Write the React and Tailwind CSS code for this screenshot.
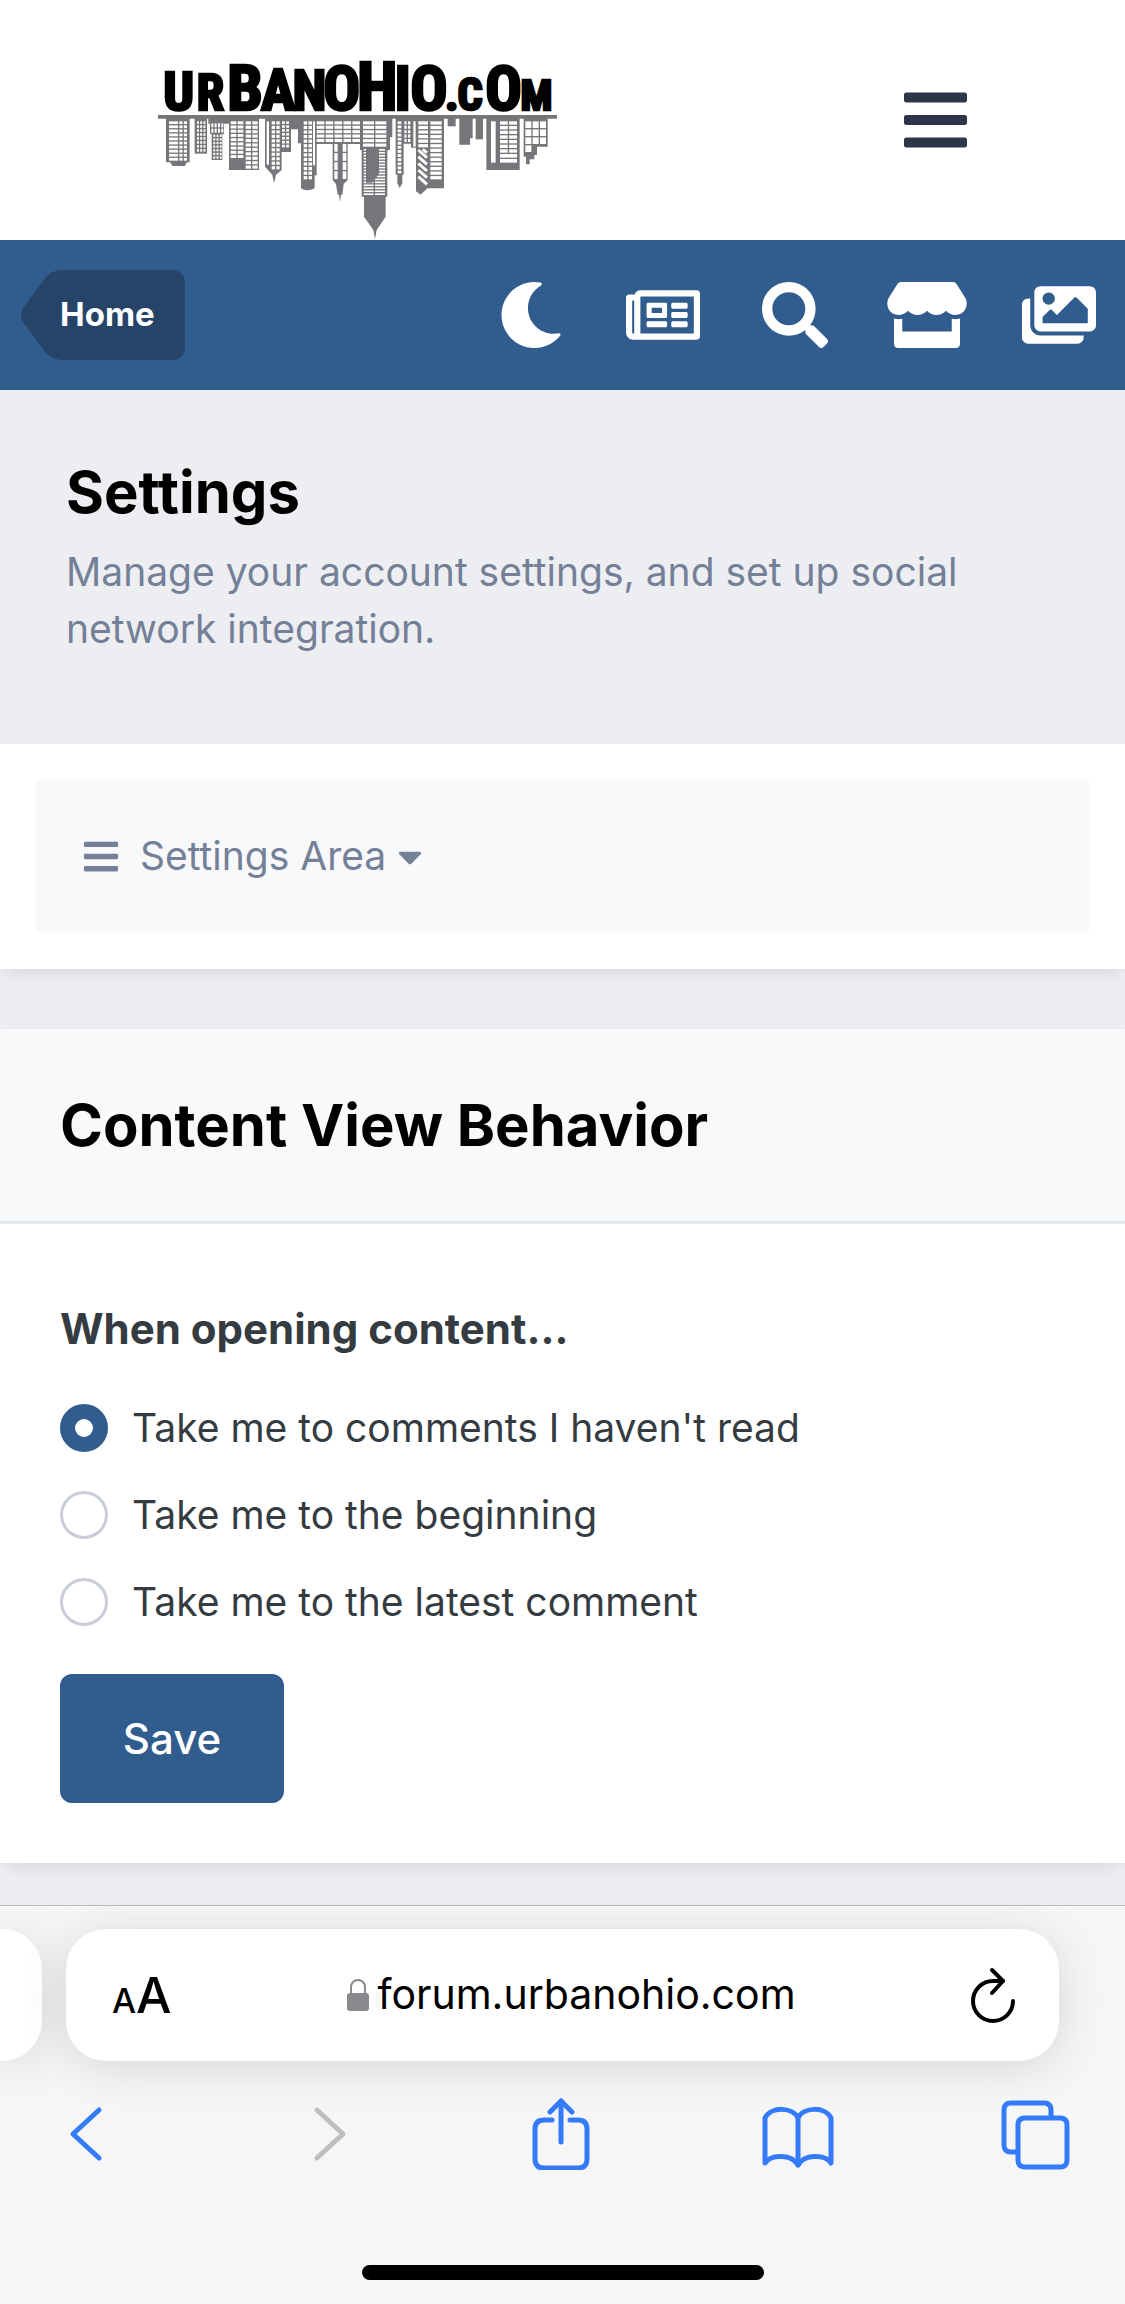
import { useState } from "react";
import { FaBars, FaCaretDown, FaImages, FaMoon, FaRegNewspaper, FaSearch, FaStore } from "react-icons/fa";

const LETTERS = [
  ["U", 116, 162],
  ["R", 211, 148],
  ["B", 315, 190],
  ["A", 414, 172],
  ["N", 508, 166],
  ["O", 605, 184],
  ["H", 712, 198],
  ["I", 788, 182],
  ["O", 867, 186],
  [".", 935, 140],
  ["C", 990, 132],
  ["O", 1091, 182],
  ["M", 1189, 126],
];

/* x, y, width, height, columns, rows of a block of lit windows */
const WINDOWS = [
  [87, 364, 27, 118, 1, 10],
  [118, 364, 23, 118, 2, 10],
  [171, 364, 25, 91, 3, 8],
  [214, 370, 36, 28, 4, 2],
  [220, 404, 25, 72, 3, 7],
  [272, 364, 38, 110, 2, 9],
  [317, 364, 36, 142, 2, 11],
  [380, 364, 7, 130, 1, 1],
  [395, 364, 24, 144, 2, 11],
  [426, 364, 21, 78, 2, 7],
  [491, 364, 25, 174, 2, 13],
  [519, 364, 6, 132, 1, 1],
  [530, 364, 130, 62, 5, 5],
  [583, 432, 10, 105, 1, 4],
  [608, 432, 11, 105, 1, 4],
  [669, 364, 70, 76, 2, 6],
  [671, 447, 64, 138, 2, 16],
  [773, 364, 11, 156, 1, 13],
  [793, 364, 18, 62, 2, 5],
  [820, 364, 7, 76, 1, 1],
  [835, 364, 29, 78, 1, 6],
  [871, 364, 34, 174, 1, 13],
  [1053, 364, 14, 124, 1, 1],
  [1080, 364, 51, 94, 2, 7],
  [1080, 462, 51, 26, 1, 2],
  [1156, 364, 62, 68, 3, 3],
  [1156, 436, 18, 20, 1, 1],
];

function WindowBlock({ block }) {
  const [x, y, w, h, cols, rows] = block;
  const gap = 4;
  const cw = (w - gap * (cols - 1)) / cols;
  const ch = (h - gap * (rows - 1)) / rows;
  const cells = [];
  for (let r = 0; r < rows; r++) {
    for (let c = 0; c < cols; c++) {
      cells.push(<rect key={`${r}-${c}`} x={x + c * (cw + gap)} y={y + r * (ch + gap)} width={cw} height={ch} />);
    }
  }
  return <g>{cells}</g>;
}

function Logo() {
  return (
    <svg viewBox="0 0 1320 720" className="h-60 w-[440px] shrink-0" role="img" aria-label="UrbanOhio.com">
      <g fill="#000" stroke="#000" strokeWidth="8" fontWeight="700" textAnchor="middle" fontFamily="'Liberation Sans Narrow', 'Roboto Condensed', 'Liberation Sans', sans-serif">
        {LETTERS.map(([ch, x, size], i) => (
          <text key={i} x={x} y="331" fontSize={size}>
            {ch}
          </text>
        ))}
      </g>
      <g fill="#77757a">
        <path d="M54 345H1251V356H54z" />
        <path d="M78 350H149V487H141L134 498H98L90 487H78z" />
        <path d="M164 350H201V461H164z" />
        <path d="M205 350H268V371H252V402H247V480H215V402H210V371H205z" />
        <path d="M267 350H357V510H267z" />
        <path d="M375 350H453V456H425V510L408 524L402 550L397 524L375 500z" />
        <path d="M453 350H530V526H524V565Q500 577 483 565V430H474V388H453z" />
        <path d="M526 350H665V432H623V540L611 552L607 584H603L600 607L597 584H593L588 552L578 540V432H526z" />
        <path d="M660 350H757V412H750V450H742V590H737V650L710 690L705 718L700 690L672 650V590H665V450H660z" />
        <path d="M767 350H813V431H791V524H787V550L779 564L772 550V524H767z" />
        <path d="M813 350H912V565H862L842 584L828 574V443H813z" />
        <path d="M923 350H947V379H923z" />
        <path d="M958 350H998V415H990V434H958z" />
        <path d="M1007 350H1029V418H1007z" />
        <path d="M1039 350H1139V510H1039z" />
        <path d="M1151 350H1223V440H1191V465H1183V478H1169V493H1158V470H1151z" />
      </g>
      <g fill="#fff">
        {WINDOWS.map((b, i) => (
          <WindowBlock key={i} block={b} />
        ))}
      </g>
      <path d="M678 443H717V522L697 548H678z" fill="#77757a" />
      <path d="M835 450L861 473M835 470L861 493M835 490L861 513M835 510L861 533M835 530L861 553M848 448L861 458" stroke="#fff" strokeWidth="9" />
    </svg>
  );
}

const NAV = [
  { label: "Dark mode", Icon: FaMoon, size: "h-[66px] w-[66px]" },
  { label: "News", Icon: FaRegNewspaper, size: "h-[66px] w-[74px]" },
  { label: "Search", Icon: FaSearch, size: "h-[66px] w-[66px]" },
  { label: "Store", Icon: FaStore, size: "h-[66px] w-20" },
  { label: "Gallery", Icon: FaImages, size: "h-[66px] w-[74px]" },
];

const OPTIONS = ["Take me to comments I haven't read", "Take me to the beginning", "Take me to the latest comment"];

const TOOLS = [
  { label: "Back", color: "text-[#347bf9]", d: ["M49 12L23 36L49 60"] },
  { label: "Forward", color: "text-[#bfbfbf]", d: ["M30 12L56 36L30 60"] },
  { label: "Share", color: "text-[#347bf9]", d: ["M36 3V44", "M25 14L36 3L47 14", "M27 22H19Q10 22 10 31V61Q10 70 19 70H53Q62 70 62 61V31Q62 22 53 22H45"] },
  { label: "Bookmarks", color: "text-[#347bf9]", d: ["M36 20V67", "M36 20C31 9 9 8 3 20V65C9 56 30 56 36 67C42 56 63 56 69 65V20C63 8 41 9 36 20z"] },
  { label: "Tabs", color: "text-[#347bf9]", d: ["M19 54H12Q5 54 5 47V12Q5 5 12 5H45Q52 5 52 12V19", "M26 20H61Q68 20 68 27V62Q68 69 61 69H26Q19 69 19 62V27Q19 20 26 20z"] },
];

export default function App() {
  const [choice, setChoice] = useState(0);
  return (
    <div className="flex min-h-screen flex-col overflow-x-hidden bg-[#edeef2] font-['Inter',sans-serif] text-[39px] text-[#353c41]">
      <header className="flex items-center justify-between bg-white pr-[158px] pl-[140px]">
        <a href="#home">
          <Logo />
        </a>
        <button type="button" aria-label="Menu" className="text-[#2d3548]">
          <FaBars className="h-18 w-[63px]" />
        </button>
      </header>

      <nav className="flex h-[150px] items-center justify-between bg-[#315c8e] pl-5">
        <a href="#home" className="relative flex h-[90px] w-[165px] items-center pl-10 text-[33px] font-bold text-white">
          <svg viewBox="0 0 165 90" className="absolute inset-0 h-full w-full" aria-hidden="true">
            <path d="M42 0H151Q165 0 165 14V76Q165 90 151 90H42Q30 90 23 79L3 52Q-1 45 3 38L23 11Q30 0 42 0z" fill="#254468" />
          </svg>
          <span className="relative">Home</span>
        </a>
        <div className="flex">
          {NAV.map(({ label, Icon, size }) => (
            <a key={label} href={`#${label}`} aria-label={label} className="flex w-[132px] justify-center text-white">
              <Icon className={size} />
            </a>
          ))}
        </div>
      </nav>

      <main>
        <section className="px-[66px] pt-[66px] pb-[87px]">
          <h1 className="text-[58px] leading-[72px] font-bold text-black">Settings</h1>
          <p className="mt-[15px] leading-[57px] text-[#738097]">Manage your account settings, and set up social network integration.</p>
        </section>

        <section className="bg-white p-9 shadow-[0_6px_18px_-6px_rgba(0,0,0,0.14)]">
          <button type="button" className="flex h-[153px] w-full items-center bg-[#f7f9fb] pl-12 text-[#738097]">
            <FaBars className="h-[39px] w-[34px]" />
            <span className="ml-[22px]">Settings Area</span>
            <FaCaretDown className="ml-3 h-[39px] w-6" />
          </button>
        </section>

        <section className="mt-15 bg-white shadow-[0_6px_18px_-6px_rgba(0,0,0,0.14)]">
          <h2 className="border-b-3 border-[#e5e7ef] bg-[#f7f9fb] px-15 py-[60px] text-[58px] leading-[72px] font-bold text-black">
            Content View Behavior
          </h2>
          <form className="px-15 pt-[75px] pb-15" onSubmit={(e) => e.preventDefault()}>
            <fieldset>
              <legend className="text-[42px] leading-[60px] font-bold">When opening content...</legend>
              <div className="mt-[45px] flex flex-col gap-[39px]">
                {OPTIONS.map((text, i) => (
                  <label key={text} className="flex h-12 items-center gap-6">
                    <input
                      type="radio"
                      name="behavior"
                      checked={choice === i}
                      onChange={() => setChoice(i)}
                      className="h-12 w-12 shrink-0 appearance-none rounded-full border-3 border-[#c9cdd8] bg-white checked:border-[15px] checked:border-[#315c8e]"
                    />
                    <span>{text}</span>
                  </label>
                ))}
              </div>
            </fieldset>
            <button type="submit" className="mt-12 h-[129px] w-56 rounded-xl bg-[#315c8e] text-[42px] font-medium text-white">
              Save
            </button>
          </form>
        </section>
      </main>

      <footer className="mt-[42px] flex grow flex-col border-t border-[#b9bbc0] bg-[#f6f6f7] pt-[23px] text-black">
        <div className="flex gap-6 pr-[66px]">
          <div className="h-33 w-[42px] shrink-0 rounded-r-[40px] bg-white shadow-[0_6px_48px_rgba(0,0,0,0.13)]" />
          <div className="flex h-33 grow items-center justify-between rounded-[40px] bg-white pr-11 pl-[46px] shadow-[0_6px_48px_rgba(0,0,0,0.13)]">
            <button type="button" aria-label="Text size" className="flex w-[60px] items-baseline font-medium">
              <span className="text-[34px]">A</span>
              <span className="text-[50px]">A</span>
            </button>
            <a href="#address" className="flex items-center gap-2 text-[41px]">
              <svg viewBox="0 0 22 32" className="h-8 w-[22px]" aria-hidden="true">
                <path d="M4 15V8a7 7 0 0 1 14 0V15" fill="none" stroke="#8a898e" strokeWidth="2" />
                <rect y="14" width="22" height="18" rx="3" fill="#8a898e" />
              </svg>
              forum.urbanohio.com
            </a>
            <button type="button" aria-label="Reload" className="flex w-[44px] justify-center">
              <svg viewBox="0 0 44 56" className="h-14 w-11" fill="none" stroke="#000" strokeWidth="4" strokeLinecap="round" strokeLinejoin="round">
                <path d="M42 34A20 20 0 1 1 22 14H32" />
                <path d="M21 3L32 14L21 26" />
              </svg>
            </button>
          </div>
        </div>
        <div className="mt-[37px] flex justify-between pr-[54px] pl-[50px]">
          {TOOLS.map(({ label, color, d }) => (
            <button key={label} type="button" aria-label={label} className={color}>
              <svg viewBox="0 0 72 72" className="h-18 w-18" fill="none" stroke="currentColor" strokeWidth="5" strokeLinecap="round" strokeLinejoin="round">
                {d.map((p) => (
                  <path key={p} d={p} />
                ))}
              </svg>
            </button>
          ))}
        </div>
        <div className="mt-auto mb-6 h-[15px] w-[402px] self-center rounded-full bg-black" />
      </footer>
    </div>
  );
}
